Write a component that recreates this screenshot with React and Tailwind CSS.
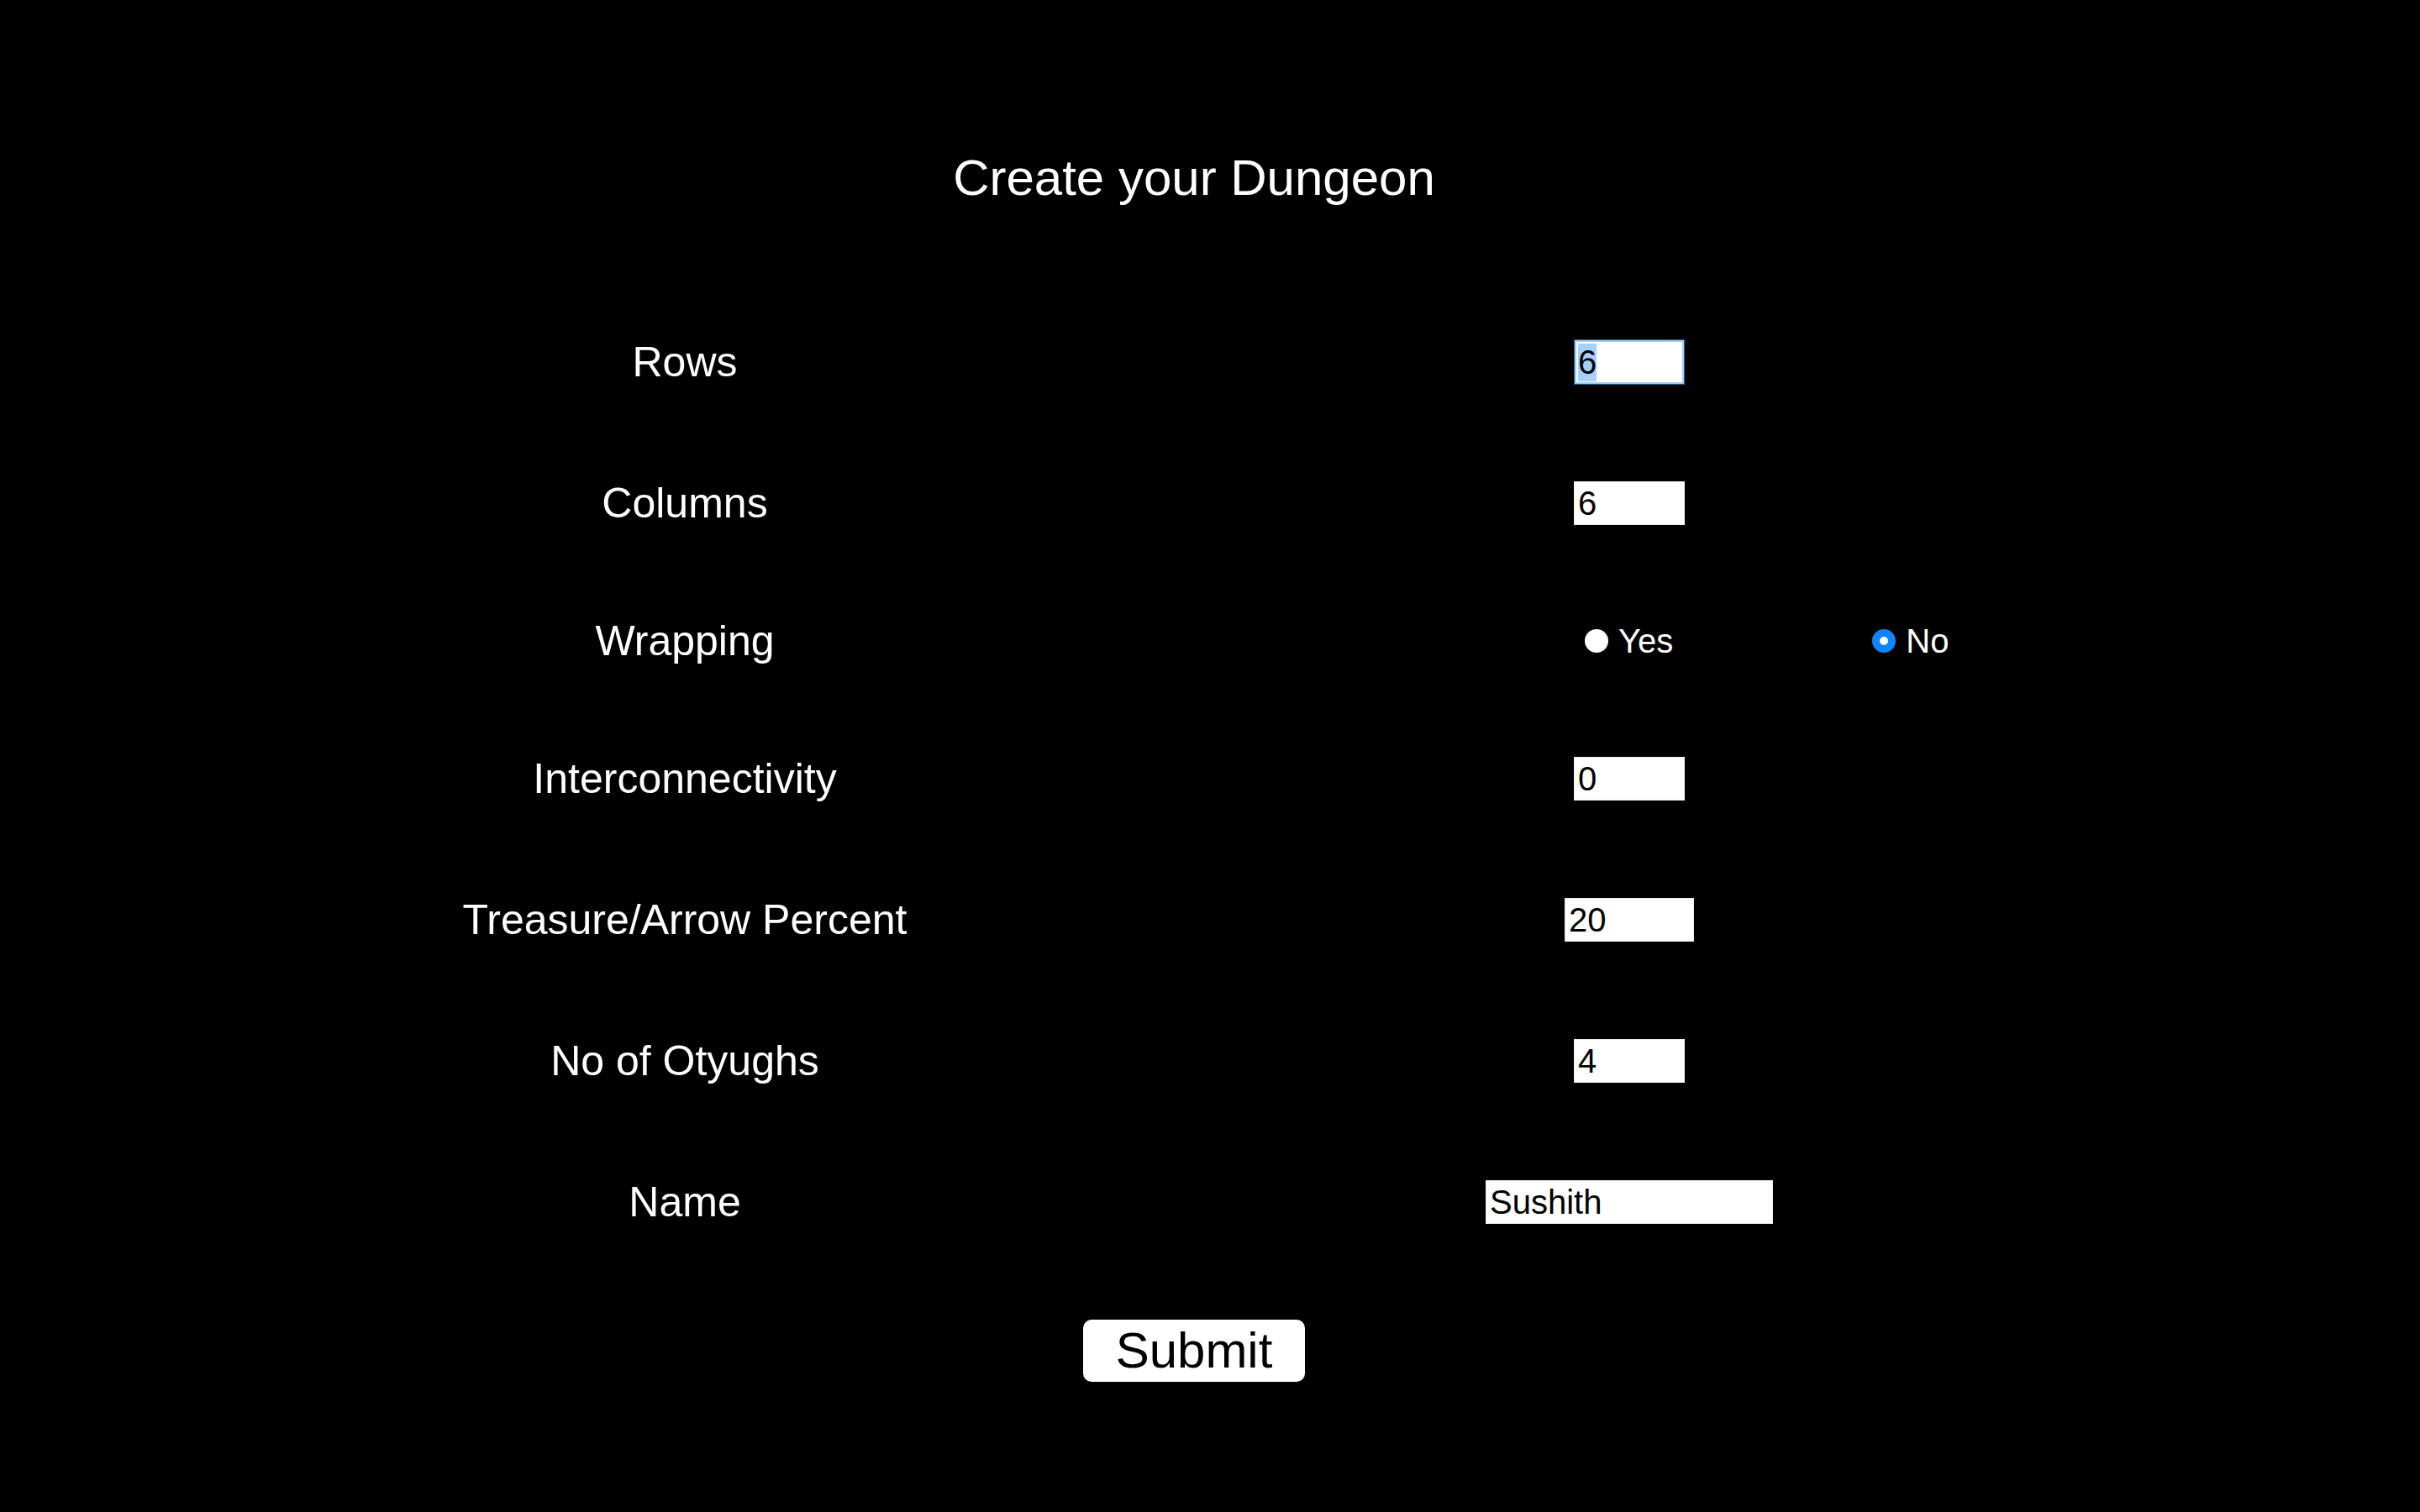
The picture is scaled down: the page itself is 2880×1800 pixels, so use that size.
import { useEffect, useRef, useState } from "react";

const font = { fontFamily: '"Liberation Sans", Arial, Helvetica, sans-serif' };

function Field({ label, children, tall = true }) {
  return (
    <div className={`grid grid-cols-[1630px_618px] items-center ${tall ? "h-[54px]" : "h-[46px]"}`}>
      <label className="text-center text-[50px] leading-[46px] text-white">{label}</label>
      <div className="flex items-center justify-center">{children}</div>
    </div>
  );
}

function TextBox({ value, onChange, width, focused, inputRef }) {
  return (
    <input
      ref={inputRef}
      type="text"
      value={value}
      onChange={(e) => onChange(e.target.value)}
      className={`h-[52px] ${width} bg-white px-[4px] text-[40px] leading-[46px] text-black outline-none selection:bg-[#a6d1fc] ${
        focused
          ? "h-[54px] border border-[#1a5f90] shadow-[inset_0_0_0_2px_#9fcdf8]"
          : "border border-[#ececec]"
      }`}
    />
  );
}

function Radio({ checked, onChange, children }) {
  return (
    <label className="flex items-center gap-[12px] text-[40px] leading-[46px] text-white">
      <input
        type="radio"
        name="wrapping"
        checked={checked}
        onChange={onChange}
        className={`h-[28px] w-[28px] appearance-none rounded-full ${
          checked ? "border-[9px] border-[#1183fb] bg-white" : "bg-white"
        }`}
      />
      {children}
    </label>
  );
}

export default function App() {
  const [form, setForm] = useState({
    rows: "6",
    cols: "6",
    wrapping: false,
    inter: "0",
    percent: "20",
    otyughs: "4",
    name: "Sushith",
  });
  const rowsRef = useRef(null);

  useEffect(() => {
    if (rowsRef.current) {
      rowsRef.current.focus();
      rowsRef.current.select();
    }
  }, []);

  const set = (key) => (v) => setForm({ ...form, [key]: v });

  return (
    <div className="min-h-screen w-full bg-black" style={font}>
      <div className="flex w-[2842px] flex-col">
        <h1 className="pt-[177px] text-center text-[60px] leading-[69px] text-white">
          Create your Dungeon
        </h1>

        <div className="mt-[158px] flex flex-col gap-[114px]">
          <Field label="Rows">
            <TextBox value={form.rows} onChange={set("rows")} width="w-[132px]" focused inputRef={rowsRef} />
          </Field>
          <Field label="Columns">
            <TextBox value={form.cols} onChange={set("cols")} width="w-[132px]" />
          </Field>
          <div className="grid h-[46px] grid-cols-[1630px_618px] items-center">
            <label className="text-center text-[50px] leading-[46px] text-white">Wrapping</label>
            <div className="flex items-center pl-[256px]">
              <Radio checked={form.wrapping} onChange={() => setForm({ ...form, wrapping: true })}>
                Yes
              </Radio>
              <div className="ml-[237px]">
                <Radio checked={!form.wrapping} onChange={() => setForm({ ...form, wrapping: false })}>
                  No
                </Radio>
              </div>
            </div>
          </div>
          <Field label="Interconnectivity">
            <TextBox value={form.inter} onChange={set("inter")} width="w-[132px]" />
          </Field>
          <Field label="Treasure/Arrow Percent">
            <TextBox value={form.percent} onChange={set("percent")} width="w-[154px]" />
          </Field>
          <Field label="No of Otyughs">
            <TextBox value={form.otyughs} onChange={set("otyughs")} width="w-[132px]" />
          </Field>
          <Field label="Name">
            <TextBox value={form.name} onChange={set("name")} width="w-[342px]" />
          </Field>
        </div>

        <div className="mt-[113px] flex justify-center pb-[150px]">
          <button className="h-[74px] w-[264px] rounded-[10px] bg-white text-[60px] leading-[74px] text-black">
            Submit
          </button>
        </div>
      </div>
    </div>
  );
}
